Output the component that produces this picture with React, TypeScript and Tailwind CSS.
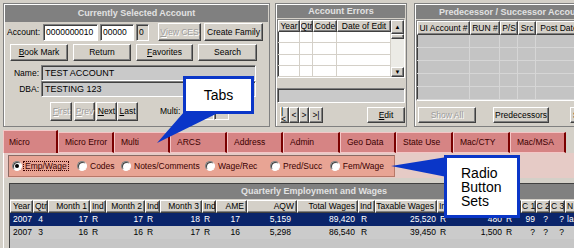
import React from "react";

const raised =
  "border border-t-white border-l-white border-r-[#404040] border-b-[#404040] shadow-[inset_-1px_-1px_0_#808080]";
const sunken =
  "border border-t-[#808080] border-l-[#808080] border-r-white border-b-white shadow-[inset_1px_1px_0_#404040]";
const off = "text-[#9c9c9c] [text-shadow:1px_1px_0_#fff]";

function Btn({
  w,
  h = "h-[17px]",
  disabled,
  className = "",
  children,
}: {
  w: string;
  h?: string;
  disabled?: boolean;
  className?: string;
  children: React.ReactNode;
}) {
  return (
    <div
      className={`flex shrink-0 items-center justify-center bg-[#d4d0c8] ${raised} ${w} ${h} ${
        disabled ? off : ""
      } ${className}`}
    >
      {children}
    </div>
  );
}

function TitleBar({ h, children }: { h: string; children: React.ReactNode }) {
  return (
    <div
      className={`mx-px mt-px flex shrink-0 items-center justify-center bg-[#808080] text-[9px] font-bold text-[#e2e2e2] ${h}`}
    >
      {children}
    </div>
  );
}

function AccountPanel() {
  return (
    <div className="flex h-[124px] w-[267px] shrink-0 flex-col border border-[#808080] shadow-[inset_1px_1px_0_#fff]">
      <TitleBar h="h-[17px]">Currently Selected Account</TitleBar>
      <div className="mt-px flex h-[18px] items-center pl-[3px]">
        <div className="w-[36px]">Account:</div>
        <div className={`flex h-[17px] w-[55px] items-center bg-white pl-[2px] ${sunken}`}>0000000010</div>
        <div className={`ml-[2px] flex h-[17px] w-[34px] items-center bg-white pl-[2px] ${sunken}`}>00000</div>
        <div className={`ml-[2px] flex h-[17px] w-[13px] items-center bg-[#d4d0c8] pl-[2px] ${sunken}`}>0</div>
        <Btn w="w-[43px]" h="h-[18px]" disabled className="ml-[9px]">
          <u>V</u>iew CES
        </Btn>
        <Btn w="w-[59px]" h="h-[18px]" className="ml-[3px]">
          Create Family
        </Btn>
      </div>
      <div className="mt-[3px] flex gap-[5px] pl-[6px]">
        <Btn w="w-[58px]">
          <u>B</u>ook Mark
        </Btn>
        <Btn w="w-[58px]">Return</Btn>
        <Btn w="w-[57px]">
          <u>F</u>avorites
        </Btn>
        <Btn w="w-[59px]">Search</Btn>
      </div>
      <div className="mt-[4px] flex h-[16px] items-center">
        <div className="w-[37px] pr-[2px] text-right">Name:</div>
        <div className={`flex h-[16px] w-[215px] items-center bg-[#c9c9c9] pl-[3px] text-[9px] ${sunken}`}>
          TEST ACCOUNT
        </div>
      </div>
      <div className="flex h-[16px] items-center">
        <div className="w-[37px] pr-[2px] text-right">DBA:</div>
        <div className={`flex h-[16px] w-[215px] items-center bg-[#c9c9c9] pl-[3px] text-[9px] ${sunken}`}>
          TESTING 123
        </div>
      </div>
      <div className="mt-[4px] flex h-[20px] items-center pl-[46px]">
        <Btn w="w-[22px]" h="h-[19px]" disabled>
          <u>F</u>irst
        </Btn>
        <Btn w="w-[21px]" h="h-[19px]" disabled className="ml-[2px]">
          <u>P</u>rev
        </Btn>
        <Btn w="w-[21px]" h="h-[19px]" className="ml-px">
          <u>N</u>ext
        </Btn>
        <Btn w="w-[21px]" h="h-[19px]">
          <u>L</u>ast
        </Btn>
        <div className="ml-[22px]">Multi:</div>
        <div className="ml-[4px] flex">
          <div className={`h-[17px] w-[15px] bg-[#d4d0c8] ${sunken}`} />
          <div className={`h-[17px] w-[15px] bg-[#d4d0c8] ${sunken}`} />
          <div className={`h-[17px] w-[15px] bg-[#d4d0c8] ${sunken}`} />
        </div>
      </div>
    </div>
  );
}

function HeadCell({ w, children }: { w: string; children: React.ReactNode }) {
  return (
    <div
      className={`flex h-full shrink-0 items-center justify-center overflow-hidden whitespace-nowrap bg-[#d4d0c8] ${raised} ${w}`}
    >
      {children}
    </div>
  );
}

function ErrorsPanel() {
  const cols = ["w-[22px]", "w-[13px]", "w-[24px]", "w-[54px]"];
  return (
    <div className="ml-[5px] flex h-[124px] w-[132px] shrink-0 flex-col border border-[#808080] shadow-[inset_1px_1px_0_#fff]">
      <TitleBar h="h-[13px]">Account Errors</TitleBar>
      <div className={`mx-px mt-px flex h-[59px] bg-white ${sunken}`}>
        <div className="flex w-[113px] flex-col">
          <div className="flex h-[14px]">
            <HeadCell w={cols[0]}>Year</HeadCell>
            <HeadCell w={cols[1]}>Qtr</HeadCell>
            <HeadCell w={cols[2]}>Code</HeadCell>
            <HeadCell w={cols[3]}>Date of Edit</HeadCell>
          </div>
          {[0, 1, 2, 3].map((r) => (
            <div key={r} className="flex h-[13px] border-b border-[#d4d0c8]">
              {cols.map((c, i) => (
                <div key={i} className={`h-full border-r border-[#d4d0c8] ${c}`} />
              ))}
            </div>
          ))}
        </div>
        <div className="flex w-[13px] flex-col bg-[#ecebe6]">
          <Btn w="w-[13px]" h="h-[14px]" className="text-[6px]">
            ▲
          </Btn>
          <div className={`h-[5px] w-[13px] bg-[#d4d0c8] ${raised}`} />
          <div className="flex-1" />
          <Btn w="w-[13px]" h="h-[10px]" className="text-[6px]">
            ▼
          </Btn>
        </div>
      </div>
      <div className={`mx-px mt-[10px] h-[15px] bg-[#c9c9c9] ${sunken}`} />
      <div className="mt-[4px] flex h-[16px] items-center pl-[4px] pr-px">
        <Btn w="w-[9px]" h="h-[16px]">|&lt;</Btn>
        <Btn w="w-[10px]" h="h-[16px]">&lt;</Btn>
        <Btn w="w-[10px]" h="h-[16px]">&gt;</Btn>
        <Btn w="w-[14px]" h="h-[16px]">&gt;|</Btn>
        <Btn w="w-[38px]" h="h-[16px]" className="ml-auto">
          <u>E</u>dit
        </Btn>
      </div>
    </div>
  );
}

function PredPanel() {
  const cols = ["w-[53px]", "w-[30px]", "w-[18px]", "w-[18px]", "w-[46px]"];
  const heads = ["UI Account #", "RUN #", "P/S", "Src", "Post Date"];
  return (
    <div className="ml-[7px] flex h-[124px] w-[200px] shrink-0 flex-col border border-[#808080] shadow-[inset_1px_1px_0_#fff]">
      <TitleBar h="h-[14px]">Predecessor / Successor Accounts</TitleBar>
      <div className={`mx-px mt-px flex h-[81px] flex-col bg-[#c4c4c4] ${sunken}`}>
        <div className="flex h-[14px]">
          {heads.map((h, i) => (
            <HeadCell key={h} w={cols[i]}>
              {h}
            </HeadCell>
          ))}
        </div>
        {[0, 1, 2, 3, 4].map((r) => (
          <div key={r} className="flex h-[13px] border-b border-[#d6d6d6]">
            {cols.map((c, i) => (
              <div key={i} className={`h-full border-r border-[#d6d6d6] ${c}`} />
            ))}
          </div>
        ))}
      </div>
      <div className="mt-[6px] flex h-[16px] items-center pl-[3px]">
        <Btn w="w-[58px]" h="h-[16px]" disabled>
          Show All
        </Btn>
        <Btn w="w-[56px]" h="h-[16px]" className="ml-[17px]">
          Predecessors
        </Btn>
        <Btn w="w-[50px]" h="h-[16px]" className="ml-[21px]">
          Successors
        </Btn>
      </div>
    </div>
  );
}

const tabs: [string, string][] = [
  ["Micro", "w-[55px]"],
  ["Micro Error", "w-[56px]"],
  ["Multi", "w-[56px]"],
  ["ARCS", "w-[57px]"],
  ["Address", "w-[56px]"],
  ["Admin", "w-[57px]"],
  ["Geo Data", "w-[56px]"],
  ["State Use", "w-[57px]"],
  ["Mac/CTY", "w-[57px]"],
  ["Mac/MSA", "w-[56px]"],
];

const radios: [string, string][] = [
  ["Emp/Wage", "w-[65px]"],
  ["Codes", "w-[44px]"],
  ["Notes/Comments", "w-[84px]"],
  ["Wage/Rec", "w-[65px]"],
  ["Pred/Succ", "w-[60px]"],
  ["Fem/Wage", "w-[55px]"],
];

type Col = { h: string; w: string; ha: string; da: string };
const qcols: Col[] = [
  { h: "Year", w: "w-[23px]", ha: "justify-start pl-[2px]", da: "justify-start pl-[3px]" },
  { h: "Qtr", w: "w-[15px]", ha: "justify-start pl-px", da: "justify-center" },
  { h: "Month 1", w: "w-[42px]", ha: "justify-end pr-[2px]", da: "justify-end pr-[2px]" },
  { h: "Ind", w: "w-[16px]", ha: "justify-start pl-px", da: "justify-start pl-[2px]" },
  { h: "Month 2", w: "w-[39px]", ha: "justify-end pr-[2px]", da: "justify-end pr-[2px]" },
  { h: "Ind", w: "w-[15px]", ha: "justify-start pl-px", da: "justify-start pl-[2px]" },
  { h: "Month 3", w: "w-[42px]", ha: "justify-end pr-[2px]", da: "justify-end pr-[2px]" },
  { h: "Ind", w: "w-[14px]", ha: "justify-start pl-px", da: "justify-start pl-[2px]" },
  { h: "AME", w: "w-[31px]", ha: "justify-end pr-[2px]", da: "justify-end pr-[7px]" },
  { h: "AQW", w: "w-[50px]", ha: "justify-end pr-[2px]", da: "justify-end pr-[6px]" },
  { h: "Total Wages", w: "w-[61px]", ha: "justify-end pr-[2px]", da: "justify-end pr-[3px]" },
  { h: "Ind", w: "w-[17px]", ha: "justify-start pl-px", da: "justify-start pl-[3px]" },
  { h: "Taxable Wages", w: "w-[62px]", ha: "justify-end pr-[2px]", da: "justify-end pr-px" },
  { h: "Ind", w: "w-[18px]", ha: "justify-start pl-px", da: "justify-start pl-[3px]" },
  { h: "Excess Wages", w: "w-[48px]", ha: "justify-end pr-[2px]", da: "justify-end pr-px" },
  { h: "Ind", w: "w-[18px]", ha: "justify-start pl-px", da: "justify-start pl-[3px]" },
  { h: "C 1", w: "w-[15px]", ha: "justify-center", da: "justify-end pr-px" },
  { h: "C 2", w: "w-[14px]", ha: "justify-center", da: "justify-end pr-[2px]" },
  { h: "C 3", w: "w-[15px]", ha: "justify-center", da: "justify-end pr-px" },
  { h: "N", w: "w-[30px]", ha: "justify-start pl-px", da: "justify-start pl-[2px]" },
];

const qrows = [
  ["2007", "4", "17", "R", "17", "R", "18", "R", "17", "5,159", "89,420", "R", "25,520", "R", "480", "R", "99", "?", "?", "la"],
  ["2007", "3", "16", "R", "16", "R", "17", "R", "16", "5,298", "86,540", "R", "39,450", "R", "1,500", "R", "?", "?", "?", ""],
];

function Radio({ label, w, on }: { label: string; w: string; on: boolean }) {
  return (
    <div className={`flex shrink-0 items-center ${w}`}>
      <div
        className={`flex h-[10px] w-[10px] items-center justify-center rounded-full bg-white ${sunken}`}
      >
        {on ? <div className="h-[4px] w-[4px] rounded-full bg-black" /> : null}
      </div>
      <div
        className={`ml-[2px] whitespace-nowrap px-px text-[#3a0000] ${
          on ? "outline outline-1 outline-dotted outline-[#3a0000]" : ""
        }`}
      >
        {label}
      </div>
    </div>
  );
}

export default function App() {
  return (
    <div className="relative h-[248px] w-[574px] overflow-hidden bg-[#d4d0c8] font-['Liberation_Sans',Arial,sans-serif] text-[8.5px] leading-none text-black">
      <div className="flex h-[127px] items-start pl-[3px] pt-[3px]">
        <AccountPanel />
        <ErrorsPanel />
        <PredPanel />
      </div>

      <div className="mt-[3px] flex h-[23px] items-end pl-[3px]">
        {tabs.map(([t, w], i) => (
          <div
            key={t}
            className={`flex shrink-0 items-center whitespace-nowrap border-l border-t border-r-2 border-l-[#f4c6c6] border-t-[#f4c6c6] border-r-[#7a0000] bg-[#d68484] text-[#3a0000] ${w} ${
              i === 0 ? "h-[23px] pl-[5px]" : "h-[21px] border-b border-b-[#f4c6c6] pl-[6px]"
            }`}
          >
            {t}
          </div>
        ))}
      </div>

      <div className="ml-[3px] border-l border-l-white">
        <div className="h-[25px] bg-[#e6cbc6] pl-[4px] pt-[2px]">
          <div className="flex h-[22px] w-[387px] items-center border border-t-[#8a6a64] border-l-[#8a6a64] border-r-[#b87868] border-b-[#b87868] bg-[#e8a494] pl-[3px]">
            {radios.map(([l, w], i) => (
              <Radio key={l} label={l} w={w} on={i === 0} />
            ))}
          </div>
        </div>

        <div className="ml-[5px] mt-[5px] w-[640px] border-l border-t border-l-[#404040] border-t-[#404040]">
          <div className="flex h-[15px] w-[608px] items-center justify-center bg-[#808080] text-[9px] font-bold text-[#e2e2e2]">
            Quarterly Employment and Wages
          </div>
          <div className="mt-px flex h-[13px]">
            {qcols.map((c, i) => (
              <div
                key={i}
                className={`flex h-full shrink-0 items-center overflow-hidden whitespace-nowrap bg-[#d4d0c8] ${raised} ${c.w} ${c.ha}`}
              >
                {c.h}
              </div>
            ))}
          </div>
          <div className="h-[60px] bg-[#c6c6c6]">
            {qrows.map((r, ri) => (
              <div
                key={ri}
                className={`flex h-[13px] ${ri === 0 ? "bg-[#0a246a] text-white" : "bg-[#cbcbcb] text-black"}`}
              >
                {r.map((v, i) => (
                  <div
                    key={i}
                    className={`flex h-full shrink-0 items-center whitespace-nowrap ${qcols[i].w} ${qcols[i].da}`}
                  >
                    {v}
                  </div>
                ))}
              </div>
            ))}
          </div>
        </div>
      </div>

      {/* callouts */}
      <svg className="pointer-events-none absolute left-0 top-0" width="574" height="248">
        <polygon points="157,143 184,112 220,112" fill="#0a36c8" />
        <polygon points="391,166 447,157 447,177" fill="#0a36c8" />
      </svg>
      <div className="absolute left-[183px] top-[76px] flex h-[38px] w-[71px] items-center justify-center border-[3px] border-[#0a36c8] bg-white font-['Liberation_Sans',Arial,sans-serif] text-[14px] leading-none text-black">
        Tabs
      </div>
      <div className="absolute left-[444px] top-[155px] h-[63px] w-[76px] border-[3px] border-[#0a36c8] bg-white pl-[14px] pt-[8px] font-['Liberation_Sans',Arial,sans-serif] text-[14px] leading-[14px] text-black">
        Radio
        <br />
        Button
        <br />
        Sets
      </div>
    </div>
  );
}
